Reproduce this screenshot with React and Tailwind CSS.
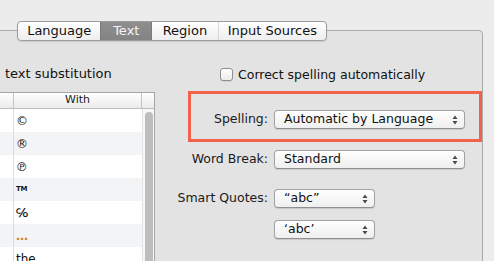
const font = { fontFamily: '"DejaVu Sans", "Liberation Sans", sans-serif' };

const tabs = [
  { name: 'Language', w: 'w-[83px]' },
  { name: 'Text', w: 'w-[52px]', active: true },
  { name: 'Region', w: 'w-[66px]' },
  { name: 'Input Sources', w: 'w-[109px]' },
];

const rows = [
  { sym: '©' },
  { sym: '®' },
  { sym: '℗' },
  { sym: 'TM', small: true },
  { sym: '℅' },
  { sym: '…', orange: true },
  { sym: 'the' },
];

function Arrows() {
  return (
    <svg width="6" height="10" viewBox="0 0 6 10" className="shrink-0">
      <path d="M3 0.5 L5.5 4 L0.5 4 Z" fill="#4a4a4a" />
      <path d="M0.5 6 L5.5 6 L3 9.5 Z" fill="#4a4a4a" />
    </svg>
  );
}

function Popup({ label, width }) {
  return (
    <div
      className={`${width} h-[19px] flex items-center justify-between pl-[9px] pr-[6px] rounded-[4px] border border-[#a3a3a3] border-b-[#8f8f8f] bg-gradient-to-b from-white to-[#efefef] shadow-[0_1px_1px_rgba(0,0,0,0.12)] text-[12.5px] text-[#111]`}
    >
      <span className="leading-none">{label}</span>
      <Arrows />
    </div>
  );
}

function Row({ label, labelW, value, popupW, className = '' }) {
  return (
    <div className={`flex items-center ${className}`}>
      <div className={`${labelW} text-right pr-[6px] text-[12.5px] text-[#1a1a1a]`}>{label}</div>
      {value && <Popup label={value} width={popupW} />}
    </div>
  );
}

export default function App() {
  return (
    <div className="w-[494px] h-[261px] overflow-hidden bg-[#ececec] relative" style={font}>
      {/* tab bar lies over the panel's top border */}
      <div className="relative z-20 ml-[17px] mt-[21px] flex h-[20px] w-[310px] rounded-[4px] border border-[#9c9c9c] bg-gradient-to-b from-white to-[#eeeeee] shadow-[0_1px_1px_rgba(0,0,0,0.1)] overflow-hidden">
        {tabs.map((t, i) => (
          <div
            key={t.name}
            className={`${t.w} flex items-center justify-center text-[13px] ${
              t.active
                ? 'bg-gradient-to-b from-[#8e8e8e] to-[#848484] text-[#f4f4f4] border-x border-[#7a7a7a]'
                : 'text-[#111]'
            } ${i === 3 ? 'border-l border-[#d6d6d6]' : ''}`}
          >
            {t.name}
          </div>
        ))}
      </div>

      {/* panel */}
      <div className="relative z-10 -mt-[11px] -ml-[1px] w-[484px] h-[260px] border border-[#aaaaaa] rounded-tr-[4px] bg-[#e3e3e3] flex">
        {/* left column */}
        <div className="w-[158px] flex flex-col">
          <div className="mt-[35px] pl-[5px] text-[13px] leading-[16px] text-[#111]">text substitution</div>
          <div className="mt-[10px] border-t border-r border-[#a5a5a5] bg-white flex-1 flex flex-col">
            <div className="h-[16px] flex border-b border-[#bdbdbd] bg-gradient-to-b from-white to-[#ebebeb] text-[11px] text-[#222]">
              <div className="w-[14px] border-r border-[#c4c4c4]" />
              <div className="w-[128px] border-r border-[#c4c4c4] flex items-center justify-center">With</div>
              <div className="flex-1" />
            </div>
            <div className="flex flex-1">
              <div className="w-[142px] flex flex-col">
                {rows.map((r, i) => (
                  <div key={i} className={`h-[23px] flex ${i % 2 === 1 ? 'bg-[#f3f4f6]' : 'bg-white'}`}>
                    <div className="w-[14px] border-r border-[#dcdcdc]" />
                    <div
                      className={`pl-[2px] flex items-center ${
                        r.small ? 'text-[7px] font-bold tracking-[-0.3px]' : 'text-[12px]'
                      } ${r.orange ? 'text-[#d0861c] font-bold' : 'text-[#111]'}`}
                    >
                      {r.sym}
                    </div>
                  </div>
                ))}
              </div>
              <div className="flex-1 bg-[#f7f7f7] border-l border-[#e2e2e2] pt-[3px] flex justify-center">
                <div className="w-[8px] h-[200px] rounded-full bg-[#bdbdbd]" />
              </div>
            </div>
          </div>
        </div>

        {/* right column */}
        <div className="flex-1 flex flex-col">
          <div className="mt-[37px] ml-[65px] flex items-center gap-[5px]">
            <div className="w-[13px] h-[13px] rounded-[3px] border border-[#8e8e8e] bg-gradient-to-b from-white to-[#ececec] shadow-[0_1px_0_rgba(0,0,0,0.08)]" />
            <span className="text-[12.5px] leading-[13px] text-[#111]">Correct spelling automatically</span>
          </div>

          <div className="relative z-30 mt-[10px] ml-[33px] w-[294px] h-[51px] border-[3px] border-[#f2614c] pt-[16px]">
            <Row label="Spelling:" labelW="w-[83px]" value="Automatic by Language" popupW="w-[191px]" />
          </div>

          <Row className="mt-[8px]" label="Word Break:" labelW="w-[119px]" value="Standard" popupW="w-[191px]" />
          <Row className="mt-[20px]" label="Smart Quotes:" labelW="w-[119px]" value="“abc”" popupW="w-[101px]" />
          <Row className="mt-[12px]" label="" labelW="w-[119px]" value="‘abc’" popupW="w-[101px]" />
        </div>
      </div>
    </div>
  );
}
